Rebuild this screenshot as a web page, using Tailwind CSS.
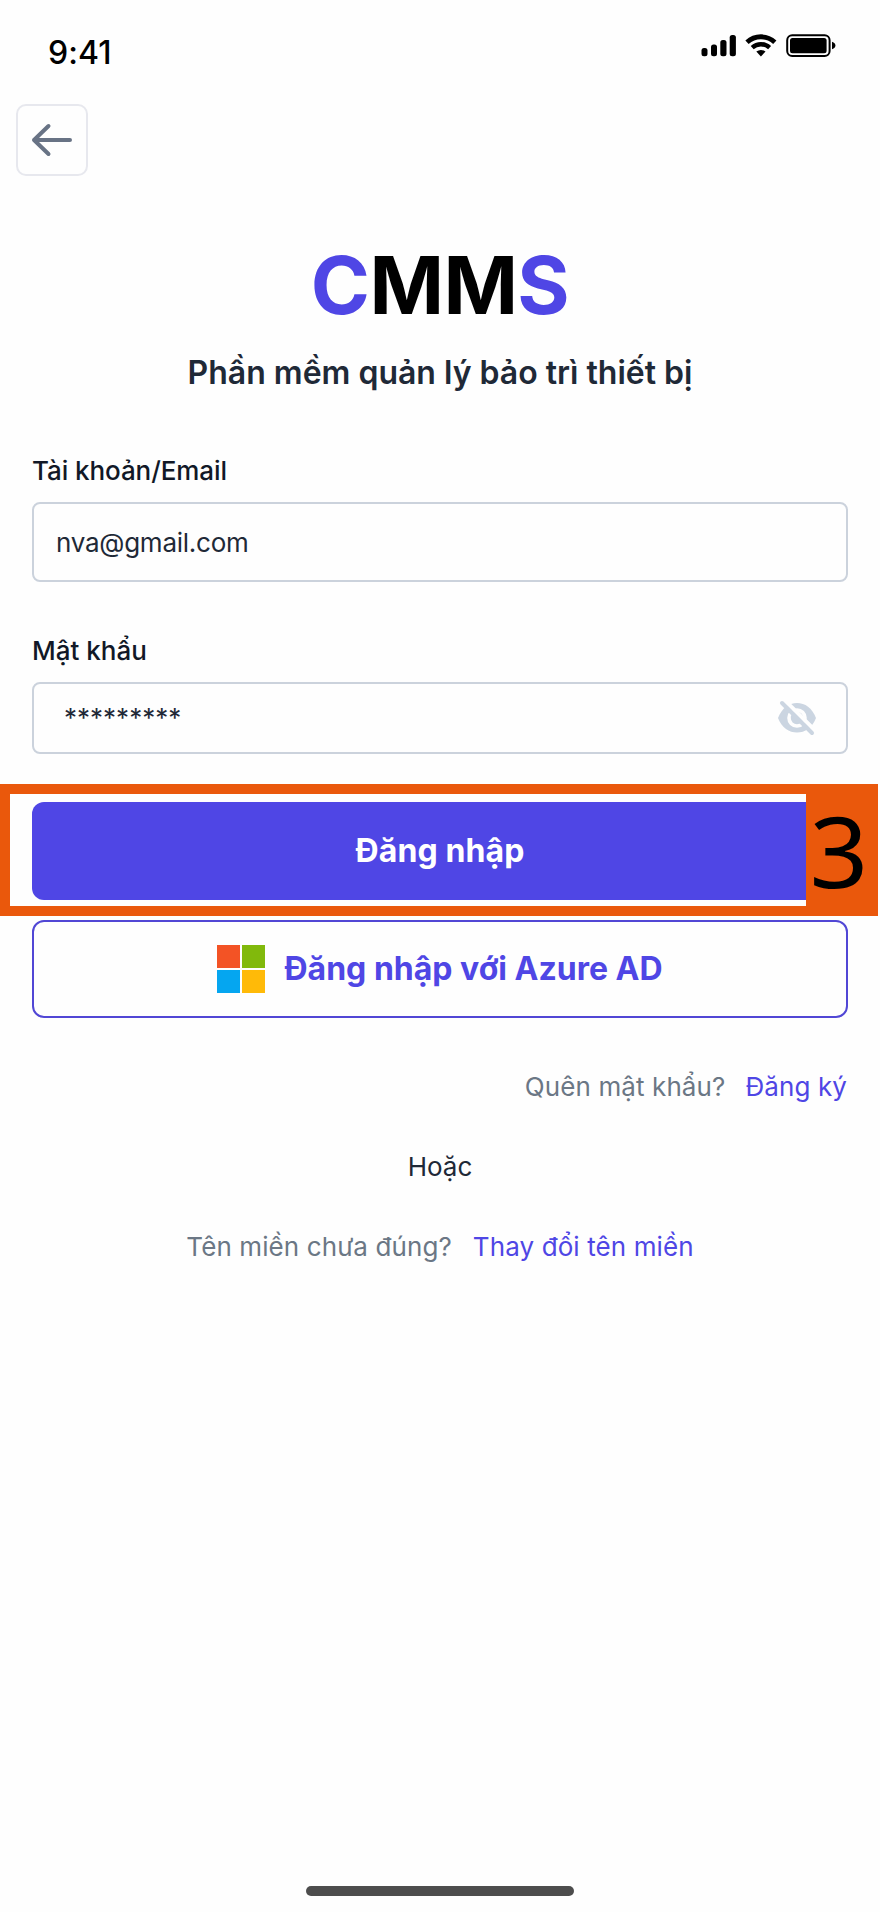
<!DOCTYPE html>
<html lang="vi">
<head>
<meta charset="utf-8">
<title>CMMS</title>
<script src="https://cdn.jsdelivr.net/npm/@tailwindcss/browser@4"></script>
</head>
<body class="bg-[#fefefe]">
<main class="relative flex h-[1912px] w-[880px] flex-col overflow-hidden whitespace-nowrap bg-[#fefefe] font-['Inter',sans-serif]">
  <header class="flex h-[104px] items-start justify-between pl-12 pr-[43px]">
    <span class="mt-[33px] text-[32px] leading-10 font-medium tracking-[0.1px] text-black">9:41</span>
    <svg class="mt-[34px]" width="136" height="24" viewBox="0 0 136 24" fill="#000">
      <rect x="0.500" y="14" width="6" height="8.300" rx="2.500"/>
      <rect x="10" y="10.500" width="6" height="11.800" rx="2.500"/>
      <rect x="19.300" y="6" width="6.200" height="16.300" rx="2.500"/>
      <rect x="28.700" y="1" width="6.200" height="21.300" rx="2.500"/>
      <g fill="none" stroke="#000">
        <path d="M46 8.200A20.500 20.500 0 0 1 73.800 8.200" stroke-width="4.800"/>
        <path d="M51.200 13.600A13 13 0 0 1 68.600 13.600" stroke-width="4.400"/>
        <rect x="86.200" y="1.200" width="42.400" height="20.800" rx="5" stroke-width="2"/>
      </g>
      <path d="M55.300 17.600Q59.900 14.400 64.500 17.600L59.900 22.400Z"/>
      <rect x="89" y="4" width="36.600" height="15.200" rx="2.500"/>
      <path d="M131 7.800Q134.400 9 134.400 11.500T131 15.200Z"/>
    </svg>
  </header>

  <button class="ml-4 flex size-[72px] items-center justify-center rounded-[10px] border-2 border-[#e7e8ee]" aria-label="Quay lại">
    <svg width="44" height="36" viewBox="0 0 44 36" fill="none" stroke="#687385" stroke-width="4" stroke-linecap="round" stroke-linejoin="round">
      <path d="M40 18H4M18.500 4L4 18L18.500 32"/>
    </svg>
  </button>

  <h1 class="mt-[69px] text-center text-[80px] leading-[80px] font-bold tracking-[-0.6px] text-black"><span class="text-[#4f46e5]">C</span>MM<span class="text-[#4f46e5]">S</span></h1>
  <h2 class="mt-[28px] text-center text-[32px] leading-10 font-semibold text-[#1f2937]">Phần mềm quản lý bảo trì thiết bị</h2>

  <form class="mt-[62px] flex flex-col px-8">
    <label class="text-[26px] leading-8 font-medium tracking-[-0.08px] text-[#111827]">Tài khoản/Email</label>
    <div class="mt-[15px] flex h-20 items-center rounded-lg border-2 border-[#cbd2dc] px-[22px] pt-px text-[26px] tracking-[-0.25px] text-[#1f2937]">nva@gmail.com</div>
    <label class="mt-[53px] text-[26px] leading-8 font-medium text-[#111827]">Mật khẩu</label>
    <div class="mt-[15px] flex h-[72px] items-center justify-between rounded-lg border-2 border-[#cbd2dc] pl-[30px] pr-[28px] text-[26px] text-[#1f2937]">
      <span class="pb-0.5">*********</span>
      <svg width="42" height="38" viewBox="0 0 42 38">
        <path d="M2 19C6 9 13 4 21 4s15 5 19 15c-4 10-11 14.500-19 14.500S6 29 2 19Z" fill="#cbd5e1"/>
        <circle cx="21" cy="19" r="8" fill="none" stroke="#fefefe" stroke-width="3.600"/>
        <path d="M8.500 1L40 32.500" stroke="#fefefe" stroke-width="4"/>
        <path d="M6 4L36 34" stroke="#cbd5e1" stroke-width="4" stroke-linecap="round"/>
      </svg>
    </div>
    <button type="button" class="mt-12 h-[98px] rounded-xl bg-[#4f46e5] text-[32px] font-bold tracking-[0.1px] text-white">Đăng nhập</button>
    <button type="button" class="mt-5 flex h-[98px] items-center justify-center rounded-xl border-2 border-[#5147d5] text-[32px] font-bold text-[#4f46e5]">
      <span class="mr-[19px] grid size-12 grid-cols-2 gap-0.5">
        <i class="bg-[#f35325]"></i><i class="bg-[#81b90c]"></i><i class="bg-[#05a6f0]"></i><i class="bg-[#ffba08]"></i>
      </span>
      Đăng nhập với Azure AD
    </button>
  </form>

  <div class="mt-[53px] flex justify-end gap-5 pr-[33px] text-[26px] leading-8 tracking-[0.1px]">
    <span class="text-[#6b7785]">Quên mật khẩu?</span><a class="text-[#4f46e5]">Đăng ký</a>
  </div>
  <p class="mt-12 text-center text-[26px] leading-8 text-[#1f2937]">Hoặc</p>
  <div class="mt-12 flex justify-center gap-[21px] text-[26px] leading-8 tracking-[0.1px]">
    <span class="text-[#6b7785]">Tên miền chưa đúng?</span><a class="text-[#4f46e5]">Thay đổi tên miền</a>
  </div>
  <div class="mx-auto mt-auto mb-4 h-2.5 w-[268px] rounded-full bg-[#4d4d4d]"></div>

  <div class="absolute top-[784px] left-0 flex h-[132px] w-[878px] justify-end border-[10px] border-r-0 border-[#ea580c]">
    <div class="-my-2.5 flex w-[72px] items-center justify-center bg-[#ea580c] pr-[5px] font-['Noto_Sans',sans-serif] text-[98px] leading-none text-black"><span class="scale-x-105">3</span></div>
  </div>
</main>
</body>
</html>
